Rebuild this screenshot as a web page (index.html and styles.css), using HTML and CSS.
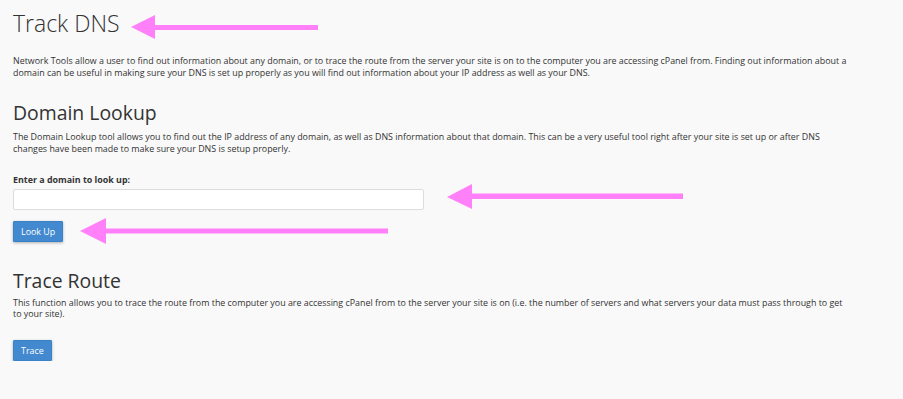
FILE: index.html
```html
<!DOCTYPE html>
<html lang="en">
<head>
    <meta charset="UTF-8">
    <meta name="viewport" content="width=device-width, initial-scale=1.0">
    <title>Track DNS</title>
    <link rel="stylesheet" href="styles.css">
</head>
<body>
    <div class="page">
        <h1 class="page-title">Track DNS</h1>
        <p class="intro">Network Tools allow a user to find out information about any domain, or to trace the route from the server your site is on to the computer you are accessing cPanel from. Finding out information about a domain can be useful in making sure your DNS is set up properly as you will find out information about your IP address as well as your DNS.</p>

        <!-- Domain Lookup -->
        <section class="tool">
            <h2 class="tool-title">Domain Lookup</h2>
            <p class="tool-desc">The Domain Lookup tool allows you to find out the IP address of any domain, as well as DNS information about that domain. This can be a very useful tool right after your site is set up or after DNS changes have been made to make sure your DNS is setup properly.</p>
            <label class="field-label" for="domain">Enter a domain to look up:</label>
            <input class="field-input" type="text" id="domain">
            <button class="btn" type="button">Look Up</button>
        </section>

        <!-- Trace Route -->
        <section class="tool tool-trace">
            <h2 class="tool-title">Trace Route</h2>
            <p class="tool-desc">This function allows you to trace the route from the computer you are accessing cPanel from to the server your site is on (i.e. the number of servers and what servers your data must pass through to get to your site).</p>
            <button class="btn btn-trace" type="button">Trace</button>
        </section>

        <!-- 注釈の矢印 -->
        <svg class="arrows" width="903" height="399" viewBox="0 0 903 399">
            <polygon points="131,27 155,15 155,39"/>
            <rect x="154" y="25" width="164" height="5"/>
            <polygon points="447,197 472,184 472,209"/>
            <rect x="471" y="193.5" width="212" height="5.5"/>
            <polygon points="80,231 106,218 106,244"/>
            <rect x="105" y="228.5" width="283" height="5"/>
        </svg>
    </div>
</body>
</html>
```

FILE: styles.css
```css
body {
    margin: 0;
    padding: 0;
    background-color: #f9f9f9;
    color: #333;
    font-family: 'Open Sans', 'Liberation Sans', sans-serif;
}

.page {
    position: relative;
    padding: 8px 13px 0;
    width: 840px;
}

.page-title {
    margin: 0;
    font-size: 23px;
    font-weight: 300;
    line-height: 30px;
}

.intro,
.tool-desc {
    margin: 0;
    font-size: 8.9px;
    line-height: 11.7px;
}

.intro {
    margin-top: 17px;
}

.tool {
    display: flex;
    flex-direction: column;
    align-items: flex-start;
    margin-top: 23px;
}

.tool-title {
    margin: 0;
    font-size: 19.4px;
    font-weight: 400;
    line-height: 24px;
}

.tool-desc {
    margin-top: 6px;
}

.field-label {
    margin-top: 19px;
    font-size: 8.9px;
    font-weight: 700;
    line-height: 11.7px;
}

.field-input {
    box-sizing: border-box;
    width: 411px;
    height: 21px;
    margin-top: 3px;
    border: 1px solid #ddd;
    border-radius: 2px;
    background: #fff;
}

.btn {
    box-sizing: border-box;
    height: 21px;
    margin-top: 11px;
    padding: 0 7px;
    border: 1px solid #3a82c8;
    border-radius: 1px;
    background-color: #4289d0;
    color: #fff;
    font-family: 'Open Sans', 'Liberation Sans', sans-serif;
    font-size: 8.9px;
    box-shadow: 0 1px 3px rgba(0, 0, 0, 0.3);
    cursor: pointer;
}

.tool-trace {
    margin-top: 27px;
}

.tool-trace .tool-desc {
    margin-top: 4px;
}

.btn-trace {
    margin-top: 20px;
}

/* 矢印は本文の上に重ねる */
.arrows {
    position: absolute;
    top: 0;
    left: 0;
    fill: #ff80f8;
    pointer-events: none;
}
```
